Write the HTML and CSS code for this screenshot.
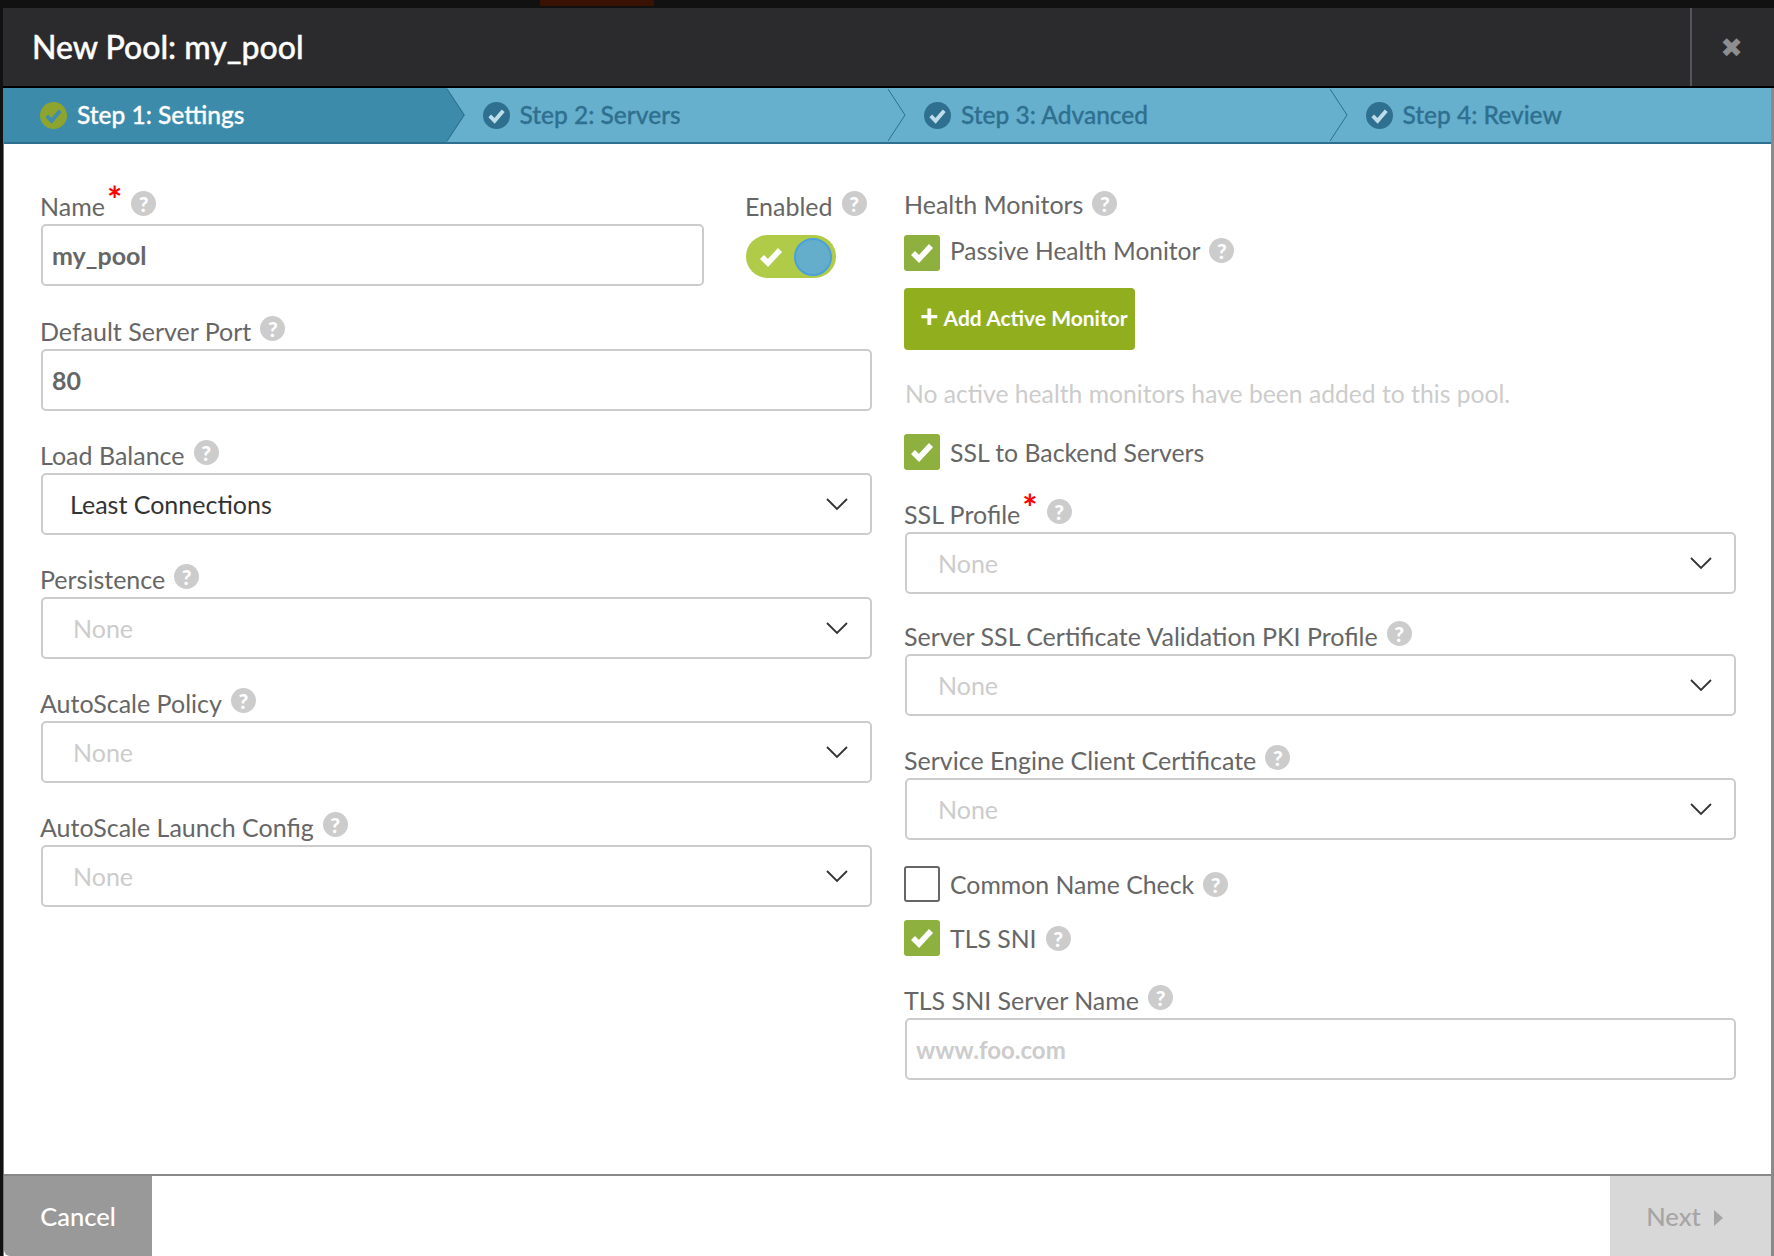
FILE: index.html
```html
<!DOCTYPE html>
<html lang="en"><head>
<meta charset="utf-8">
<title>New Pool: my_pool</title>
<link rel="stylesheet" href="styles.css">
</head><body>

<svg class="defs" width="0" height="0">
	<symbol id="chev" viewBox="0 0 24 14"><polyline points="2,2 12,12 22,2" fill="none" stroke="#333" stroke-width="1.8"/></symbol>
	<symbol id="tick" viewBox="0 0 24 24"><polyline points="3,12 9,18 21,5" fill="none" stroke="#fff" stroke-width="5.6"/></symbol>
</svg>

<div class="topstrip"><span class="topstrip-tab"></span></div>

<div class="modal">
	<header class="modal-head">
		<h1>New Pool: my_pool</h1>
		<button class="close" type="button">&#10006;</button>
	</header>

	<nav class="steps">
		<div class="step step-active">
			<svg class="step-icon" viewBox="0 0 28 28"><circle cx="14" cy="14" r="14" fill="#8da42e"/><polyline points="7,14.5 12,19.5 21,9" fill="none" stroke="#3f8cae" stroke-width="4"/></svg>
			<span>Step 1: Settings</span>
			<svg class="step-arrow" viewBox="0 0 18 54" preserveAspectRatio="none"><polygon points="0,0 18,27 0,54" fill="#3d8bab"/><polyline points="0,1 17,27 0,53" fill="none" stroke="#2f6f8f" stroke-width="1"/></svg>
		</div>
		<div class="step">
			<svg class="step-icon" viewBox="0 0 28 28"><circle cx="14" cy="14" r="14" fill="#2f6f8f"/><polyline points="7,14.5 12,19.5 21,9" fill="none" stroke="#bcdde9" stroke-width="4"/></svg>
			<span>Step 2: Servers</span>
			<svg class="step-arrow" viewBox="0 0 18 54" preserveAspectRatio="none"><polyline points="0,1 17,27 0,53" fill="none" stroke="#2f6f8f" stroke-width="1"/></svg>
		</div>
		<div class="step">
			<svg class="step-icon" viewBox="0 0 28 28"><circle cx="14" cy="14" r="14" fill="#2f6f8f"/><polyline points="7,14.5 12,19.5 21,9" fill="none" stroke="#bcdde9" stroke-width="4"/></svg>
			<span>Step 3: Advanced</span>
			<svg class="step-arrow" viewBox="0 0 18 54" preserveAspectRatio="none"><polyline points="0,1 17,27 0,53" fill="none" stroke="#2f6f8f" stroke-width="1"/></svg>
		</div>
		<div class="step">
			<svg class="step-icon" viewBox="0 0 28 28"><circle cx="14" cy="14" r="14" fill="#2f6f8f"/><polyline points="7,14.5 12,19.5 21,9" fill="none" stroke="#bcdde9" stroke-width="4"/></svg>
			<span>Step 4: Review</span>
		</div>
	</nav>

	<main class="form">
		<section class="col">
			<div class="row-name">
				<div class="field field-grow">
					<label class="lbl">Name<sup class="req">*</sup><i class="help">?</i></label>
					<input class="box box-bold" type="text" value="my_pool">
				</div>
				<div class="field field-enabled">
					<label class="lbl">Enabled<i class="help">?</i></label>
					<div class="toggle">
						<svg class="toggle-tick"><use href="#tick"/></svg>
						<span class="knob"></span>
					</div>
				</div>
			</div>
			<div class="field">
				<label class="lbl">Default Server Port<i class="help">?</i></label>
				<input class="box box-bold" type="text" value="80">
			</div>
			<div class="field">
				<label class="lbl">Load Balance<i class="help">?</i></label>
				<div class="box sel sel-value">Least Connections<svg class="chev"><use href="#chev"/></svg></div>
			</div>
			<div class="field">
				<label class="lbl">Persistence<i class="help">?</i></label>
				<div class="box sel">None<svg class="chev"><use href="#chev"/></svg></div>
			</div>
			<div class="field">
				<label class="lbl">AutoScale Policy<i class="help">?</i></label>
				<div class="box sel">None<svg class="chev"><use href="#chev"/></svg></div>
			</div>
			<div class="field">
				<label class="lbl">AutoScale Launch Config<i class="help">?</i></label>
				<div class="box sel">None<svg class="chev"><use href="#chev"/></svg></div>
			</div>
		</section>

		<section class="col">
			<div class="lbl lbl-plain">Health Monitors<i class="help">?</i></div>
			<div class="check-row check-first"><span class="check on"><svg><use href="#tick"/></svg></span>Passive Health Monitor<i class="help">?</i></div>
			<button class="add-btn" type="button"><span class="plus">+</span>Add Active Monitor</button>
			<p class="empty">No active health monitors have been added to this pool.</p>
			<div class="check-row"><span class="check on"><svg><use href="#tick"/></svg></span>SSL to Backend Servers</div>

			<div class="field field-ssl">
				<label class="lbl">SSL Profile<sup class="req">*</sup><i class="help">?</i></label>
				<div class="box sel sel-right">None<svg class="chev"><use href="#chev"/></svg></div>
			</div>
			<div class="field">
				<label class="lbl">Server SSL Certificate Validation PKI Profile<i class="help">?</i></label>
				<div class="box sel sel-right">None<svg class="chev"><use href="#chev"/></svg></div>
			</div>
			<div class="field">
				<label class="lbl">Service Engine Client Certificate<i class="help">?</i></label>
				<div class="box sel sel-right">None<svg class="chev"><use href="#chev"/></svg></div>
			</div>
			<div class="check-row"><span class="check"></span>Common Name Check<i class="help">?</i></div>
			<div class="check-row check-sni"><span class="check on"><svg><use href="#tick"/></svg></span>TLS SNI<i class="help">?</i></div>
			<div class="field field-sni">
				<label class="lbl">TLS SNI Server Name<i class="help">?</i></label>
				<input class="box box-ph" type="text" placeholder="www.foo.com">
			</div>
		</section>
	</main>

	<footer class="foot">
		<button class="btn-cancel" type="button">Cancel</button>
		<button class="btn-next" type="button">Next<span class="next-arrow"></span></button>
	</footer>
</div>

</body></html>
```

FILE: styles.css
```css
* {
	box-sizing : border-box;
}
html, body {
	margin   : 0;
	height   : 100%;
	overflow : hidden;
}
body {
	display        : flex;
	flex-direction : column;
	background     : #111;
	color          : #666;
	font-family    : Lato, "Open Sans", sans-serif;
	font-size      : 25px;
}
.defs {
	display : none;
}

/* what shows of the page behind the dialog */
.topstrip {
	height       : 6px;
	flex         : none;
	background   : #111;
	padding-left : 540px;
}
.topstrip-tab {
	display    : block;
	width      : 114px;
	height     : 6px;
	background : #3a1203;
}

.modal {
	flex           : 1;
	display        : flex;
	flex-direction : column;
	margin-top     : 2px;
	margin-left    : 3px;
	min-height     : 0;
	background     : #fff;
	border-right   : 3px solid #8a8a8a;
	border-left    : 1px solid #777;
	border-radius  : 4px 4px 0 0;
}
.modal-head {
	height        : 80px;
	flex          : none;
	display       : flex;
	align-items   : center;
	background    : #2b2b2d;
	border-bottom : 2px solid #000;
	margin-left   : -1px;
	margin-right  : -3px;
}
.modal-head h1 {
	flex           : 1;
	margin         : 0;
	padding        : 0 0 2px 29px;
	color          : #fff;
	font-size      : 32px;
	font-weight    : 500;
	-webkit-text-stroke : .4px #fff;
}
.close {
	width         : 84px;
	height        : 100%;
	padding-right : 9px;
	border        : 0;
	border-left   : 2px solid #55565a;
	background    : none;
	color         : #8e8e90;
	font-size     : 27px;
	font-family   : "DejaVu Sans", sans-serif;
}

.steps {
	height        : 56px;
	flex          : none;
	display       : flex;
	background    : #66afcd;
	border-bottom : 2px solid #2f6f8f;
	color         : #2f6f8f;
	font-size     : 24.5px;
	font-weight   : 500;
	-webkit-text-stroke : .3px;
}
.step {
	position     : relative;
	width        : 442px;
	display      : flex;
	align-items  : center;
	gap          : 10px;
	padding-left : 36px;
}
.step span {
	padding-bottom : 2px;
}
.step-active {
	background : #3d8bab;
	color      : #fff;
	width      : 443px;
}
.step-icon {
	width  : 27px;
	height : 27px;
}
.step-arrow {
	position : absolute;
	top      : 0;
	left     : 100%;
	width    : 18px;
	height   : 54px;
}

.form {
	flex    : 1;
	display : grid;
	grid-template-columns : 831px 831px;
	column-gap : 33px;
	padding : 44px 0 0 37px;
}
.col {
	min-width : 0;
}
.row-name {
	display : flex;
	gap     : 42px;
}
.field {
	display        : flex;
	flex-direction : column;
	margin-bottom  : 26px;
}
.field-grow {
	flex          : none;
	width         : 663px;
	margin-bottom : 27px;
}
.field-enabled {
	margin-bottom : 0;
}
.lbl {
	height      : 36px;
	line-height : 36px;
	margin-left : -1px;
	display     : flex;
	align-items : flex-start;
	white-space : nowrap;
}
.lbl-plain {
	line-height : 33px;
}
.req {
	color       : #f00;
	font-size   : 36px;
	font-weight : 700;
	line-height : 24px;
	margin-top  : -1px;
	margin-left : 2px;
}
.help {
	display       : inline-block;
	flex          : none;
	width         : 25px;
	height        : 25px;
	margin-left   : 9px;
	border-radius : 50%;
	background    : #ccc;
	color         : #fff;
	font-size     : 21px;
	font-style    : normal;
	font-weight   : 900;
	line-height   : 25px;
	text-align    : center;
}
.lbl .help {
	margin-top : 3px;
}
.box {
	display       : block;
	width         : 100%;
	height        : 62px;
	padding       : 0 9px;
	border        : 2px solid #ccc;
	border-radius : 5px;
	background    : #fff;
	font-family   : inherit;
	font-size     : 25px;
	color         : #666;
	outline       : 0;
}
.box-bold {
	font-weight : 700;
}
.box-ph {
	font-size   : 24px;
	font-weight : 700;
}
.box-ph::placeholder {
	color : #ccc;
}
.sel {
	position    : relative;
	display     : flex;
	align-items : center;
	padding     : 0 0 0 30px;
	color       : #ccc;
}
.sel-value {
	padding-left : 27px;
	color        : #333;
}
.sel-right {
	padding-left : 31px;
}
.chev {
	position : absolute;
	top      : 22px;
	right    : 21px;
	width    : 24px;
	height   : 14px;
}

.toggle {
	width           : 90px;
	height          : 43px;
	margin-top      : 11px;
	display         : flex;
	align-items     : center;
	justify-content : space-between;
	padding         : 0 4px 0 13px;
	border-radius   : 22px;
	background      : #afcb47;
}
.toggle-tick {
	width  : 24px;
	height : 24px;
}
.knob {
	width         : 38px;
	height        : 38px;
	border-radius : 50%;
	background    : #65aecb;
	border        : 2px solid #4a9fdc;
}

.check-row {
	display     : flex;
	align-items : center;
	height      : 36px;
	margin-left : -1px;
	font-size   : 24.8px;
}
.check {
	flex          : none;
	display       : block;
	width         : 36px;
	height        : 36px;
	margin-right  : 10px;
	border        : 2px solid #666;
	border-radius : 3px;
}
.check.on {
	background : #8eb03e;
	border     : 0;
	padding    : 6px;
}
.check svg {
	display : block;
	width   : 24px;
	height  : 24px;
}
.check-first {
	margin-top  : 11px;
	align-items : flex-start;
	line-height : 32px;
	font-size   : 24.5px;
}
.check-first .help {
	margin-top : 3px;
}
.check-sni {
	margin-top : 18px;
}
.add-btn {
	display       : block;
	width         : 231px;
	height        : 62px;
	margin-top    : 17px;
	margin-left   : -1px;
	padding       : 0 0 4px 16px;
	border        : 0;
	border-radius : 4px;
	background    : #90ae1e;
	color         : #fff;
	font-family   : inherit;
	font-size     : 21px;
	font-weight   : 700;
	text-align    : left;
	white-space   : nowrap;
}
.plus {
	font-weight    : 900;
	font-size      : 32px;
	margin-right   : 5px;
	line-height    : 20px;
	vertical-align : -2px;
}
.empty {
	height      : 84px;
	margin      : 0;
	padding-top : 29px;
	color       : #ccc;
	font-size   : 24.7px;
}
.field-ssl {
	margin-top    : 26px;
	margin-bottom : 24px;
}
.field-sni {
	margin-top    : 26px;
	margin-bottom : 0;
}

.foot {
	height          : 82px;
	flex            : none;
	display         : flex;
	justify-content : space-between;
	border-top      : 2px solid #888;
}
.foot button {
	border      : 0;
	font-family : inherit;
	font-size   : 25.5px;
	font-weight : 500;
}
.btn-cancel {
	width         : 148px;
	background    : #999;
	color         : #fff;
	border-radius : 0 0 0 6px;
}
.btn-next {
	width         : 161px;
	padding-right : 18px;
	background    : #d8d8d8;
	color         : #a5a5a5;
}
.next-arrow {
	display       : inline-block;
	margin-left   : 13px;
	border-left   : 9px solid #a5a5a5;
	border-top    : 8px solid transparent;
	border-bottom : 8px solid transparent;
}
```
